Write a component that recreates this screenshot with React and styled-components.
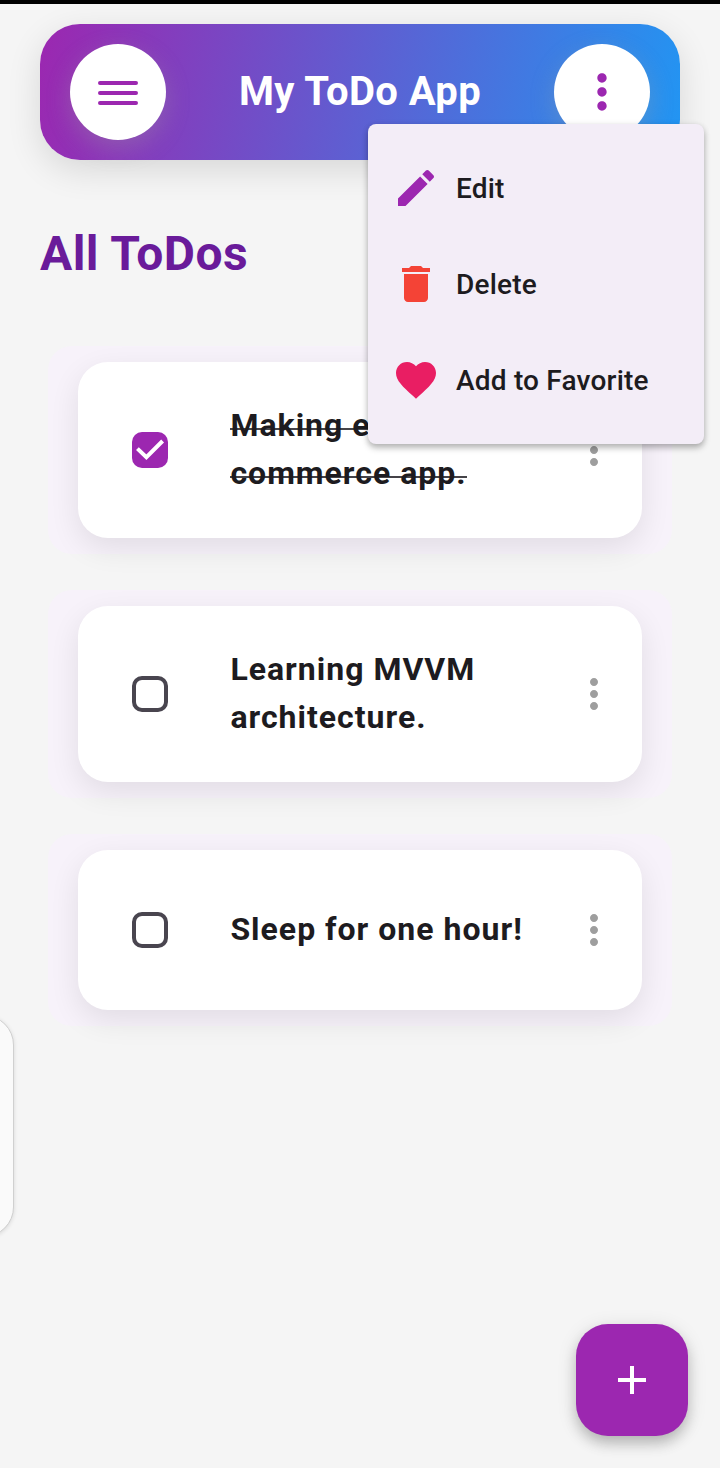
import React from 'react';
import styled, { createGlobalStyle, css } from 'styled-components';

const GlobalStyle = createGlobalStyle`
  * { box-sizing: border-box; }
  body {
    margin: 0;
    background: #f5f5f5;
    color: #1d1b20;
    font-family: Roboto, "Liberation Sans", sans-serif;
  }
`;

const Screen = styled.div`
  position: relative;
  width: 720px;
  height: 1468px;
  margin: 0 auto;
  overflow: hidden;
  background: #f5f5f5;
  border-top: 4px solid #000;
  padding: 20px 40px 0;
`;

const Header = styled.header`
  display: flex;
  align-items: center;
  justify-content: space-between;
  height: 136px;
  padding: 0 30px;
  border-radius: 40px;
  background: linear-gradient(102deg, #9c27b0, #2196f3);
  box-shadow: 0 10px 34px rgba(0, 0, 0, 0.12);
`;

const Title = styled.h1`
  margin: 0;
  font-size: 40px;
  line-height: 48px;
  font-weight: 700;
  letter-spacing: 0.4px;
  color: #fff;
`;

const RoundButton = styled.button`
  display: flex;
  align-items: center;
  justify-content: center;
  width: 96px;
  height: 96px;
  padding: 0;
  border: 0;
  border-radius: 50%;
  background: #fff;
  color: #9c27b0;
  box-shadow: 0 8px 24px rgba(158, 158, 158, 0.32);
`;

const Heading = styled.h2`
  margin: 64px 0 60px;
  font-size: 48px;
  line-height: 60px;
  font-weight: 700;
  letter-spacing: 0.45px;
  color: #6a1b9a;
`;

const List = styled.main`
  display: flex;
  flex-direction: column;
  gap: 36px;
  padding: 2px 8px 0;
`;

const CardShell = styled.section`
  padding: 16px 30px;
  border-radius: 24px;
  background: #f7f2fa;
`;

const Card = styled.article`
  display: flex;
  align-items: center;
  height: ${(p) => (p.$tall ? 176 : 160)}px;
  padding: 0 24px 0 54px;
  border-radius: 30px;
  background: #fff;
  box-shadow: 0 10px 30px rgba(0, 0, 10, 0.09);
`;

const Checkbox = styled.span`
  display: flex;
  flex: none;
  width: 36px;
  height: 36px;
  border-radius: 10px;
  ${(p) =>
    p.$checked
      ? css`background: #9c27b0;`
      : css`border: 4px solid #49454f;`}
`;

const TaskText = styled.p`
  flex: 1;
  margin: 0 0 2px 62.4px;
  font-size: 32px;
  line-height: 48px;
  font-weight: 700;
  letter-spacing: 1px;
  white-space: pre-line;
`;

const Strike = styled.span`
  box-decoration-break: clone;
  -webkit-box-decoration-break: clone;
  background: linear-gradient(#454348, #454348) 0 22px / 100% 2px no-repeat;
`;

const TaskMenu = styled.button`
  display: flex;
  flex: none;
  padding: 0;
  border: 0;
  background: none;
  color: #9e9e9e;
`;

const Popup = styled.nav`
  position: absolute;
  top: 120px;
  right: 16px;
  width: 336px;
  padding: 16px 0;
  border-radius: 8px;
  background: #f3edf7;
  box-shadow: 0 4px 6px rgba(0, 0, 0, 0.25), 0 1px 6px rgba(0, 0, 0, 0.1);
`;

const PopupItem = styled.div`
  display: flex;
  align-items: center;
  gap: 16px;
  height: 96px;
  padding: 0 24px;
`;

const PopupLabel = styled.span`
  padding-top: 2px;
  font-size: 28px;
  line-height: 40px;
  font-weight: 500;
  letter-spacing: 0.2px;
`;

const Fab = styled.button`
  position: absolute;
  right: 32px;
  bottom: 32px;
  display: flex;
  align-items: center;
  justify-content: center;
  width: 112px;
  height: 112px;
  padding: 0;
  border: 0;
  border-radius: 32px;
  background: #9c27b0;
  color: #fff;
  box-shadow: 0 8px 14px -1px rgba(0, 0, 0, 0.2), 0 4px 20px rgba(0, 0, 0, 0.12);
`;

const EdgeHandle = styled.aside`
  position: absolute;
  left: -46px;
  top: 1011px;
  width: 60px;
  height: 222px;
  border: 1px solid #d0d0d0;
  border-radius: 34px;
  background: #fafafa;
  box-shadow: 0 1px 4px rgba(0, 0, 0, 0.12);
`;

const Icon = ({ path, size = 48, color = 'currentColor' }) => (
  <svg width={size} height={size} viewBox="0 0 24 24" fill={color} aria-hidden="true">
    <path d={path} />
  </svg>
);

const PATHS = {
  edit: 'M3 17.25V21h3.75L17.81 9.94l-3.75-3.75L3 17.25zM20.71 7.04c.39-.39.39-1.02 0-1.41l-2.34-2.34c-.39-.39-1.02-.39-1.41 0l-1.83 1.83 3.75 3.75 1.83-1.83z',
  remove: 'M6 19c0 1.1.9 2 2 2h8c1.1 0 2-.9 2-2V7H6v12zM19 4h-3.5l-1-1h-5l-1 1H5v2h14V4z',
  favorite: 'M12 21.35l-1.45-1.32C5.4 15.36 2 12.28 2 8.5 2 5.42 4.42 3 7.5 3c1.74 0 3.41.81 4.5 2.09C13.09 3.81 14.76 3 16.5 3 19.58 3 22 5.42 22 8.5c0 3.78-3.4 6.86-8.55 11.54L12 21.35z',
  more: 'M12 8c1.1 0 2-.9 2-2s-.9-2-2-2-2 .9-2 2 .9 2 2 2zm0 2c-1.1 0-2 .9-2 2s.9 2 2 2 2-.9 2-2-.9-2-2-2zm0 6c-1.1 0-2 .9-2 2s.9 2 2 2 2-.9 2-2-.9-2-2-2z',
  add: 'M19 13h-6v6h-2v-6H5v-2h6V5h2v6h6v2z',
};

const MenuGlyph = styled.svg`
  margin-top: 2px;
  fill: none;
  stroke: currentColor;
  stroke-width: 4;
  stroke-linecap: round;
`;

const MenuIcon = () => (
  <MenuGlyph width="40" height="24" viewBox="0 0 40 24">
    <path d="M2 2h36M2 12h36M2 22h36" />
  </MenuGlyph>
);

const CheckMark = () => (
  <svg width="36" height="36" viewBox="0 0 36 36" fill="none" stroke="#fff" strokeWidth="4">
    <path d="M5.4 16.6 14.4 25.2 30.6 9" />
  </svg>
);

const TASKS = [
  { text: 'Making e-\ncommerce app.', done: true, tall: true },
  { text: 'Learning MVVM\narchitecture.', done: false, tall: true },
  { text: 'Sleep for one hour!', done: false, tall: false },
];

const ACTIONS = [
  { label: 'Edit', icon: 'edit', color: '#9c27b0' },
  { label: 'Delete', icon: 'remove', color: '#f44336' },
  { label: 'Add to Favorite', icon: 'favorite', color: '#e91e63' },
];

export default function App() {
  return (
    <>
      <GlobalStyle />
      <Screen>
        <Header>
          <RoundButton aria-label="Menu"><MenuIcon /></RoundButton>
          <Title>My ToDo App</Title>
          <RoundButton aria-label="More"><Icon path={PATHS.more} size={56} /></RoundButton>
        </Header>
        <Heading>All ToDos</Heading>
        <List>
          {TASKS.map((t) => (
            <CardShell key={t.text}>
              <Card $tall={t.tall}>
                <Checkbox $checked={t.done}>{t.done && <CheckMark />}</Checkbox>
                <TaskText>{t.done ? <Strike>{t.text}</Strike> : t.text}</TaskText>
                <TaskMenu aria-label="Task options"><Icon path={PATHS.more} /></TaskMenu>
              </Card>
            </CardShell>
          ))}
        </List>
        <EdgeHandle />
        <Popup>
          {ACTIONS.map((a) => (
            <PopupItem key={a.label}>
              <Icon path={PATHS[a.icon]} color={a.color} />
              <PopupLabel>{a.label}</PopupLabel>
            </PopupItem>
          ))}
        </Popup>
        <Fab aria-label="Add"><Icon path={PATHS.add} /></Fab>
      </Screen>
    </>
  );
}
